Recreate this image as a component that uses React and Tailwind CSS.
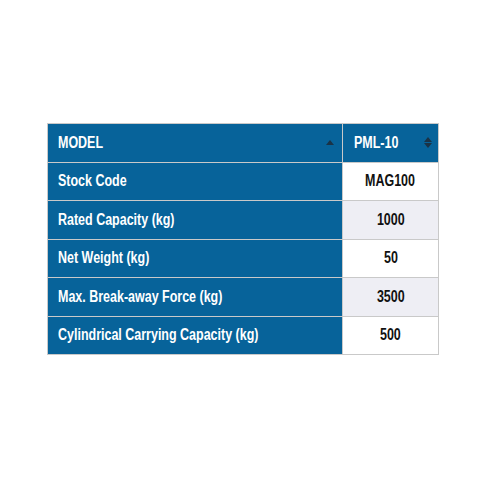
const rows = [
  ["Stock Code", "MAG100"],
  ["Rated Capacity (kg)", "1000"],
  ["Net Weight (kg)", "50"],
  ["Max. Break-away Force (kg)", "3500"],
  ["Cylindrical Carrying Capacity (kg)", "500"],
];

const Narrow = ({ children, center }) => (
  <span
    className={`inline-block whitespace-nowrap scale-x-[0.78] ${
      center ? "origin-center" : "origin-left"
    }`}
  >
    {children}
  </span>
);

const App = () => {
  return (
    <div
      className="w-[480px] h-[480px] bg-white pt-[123px] pl-[47px]"
      style={{ fontFamily: '"Liberation Sans", Arial, sans-serif' }}
    >
      <table className="border-collapse w-[392px] text-[16px] font-bold">
        <thead>
          <tr className="h-[38.5px]">
            <th className="w-[295px] border border-[#c9c9c9] bg-[#07639a] text-white text-left pl-[10px] pr-[8px]">
              <div className="flex items-center justify-between">
                <Narrow>MODEL</Narrow>
                <span className="w-0 h-0 border-l-[4px] border-r-[4px] border-b-[5px] border-l-transparent border-r-transparent border-b-[#1a3347]" />
              </div>
            </th>
            <th className="border border-[#c9c9c9] bg-[#07639a] text-white text-left pl-[11px] pr-[6px]">
              <div className="flex items-center justify-between">
                <Narrow>PML-10</Narrow>
                <span className="flex flex-col gap-[1px]">
                  <span className="w-0 h-0 border-l-[4px] border-r-[4px] border-b-[5px] border-l-transparent border-r-transparent border-b-[#1a3347]" />
                  <span className="w-0 h-0 border-l-[4px] border-r-[4px] border-t-[5px] border-l-transparent border-r-transparent border-t-[#1a3347]" />
                </span>
              </div>
            </th>
          </tr>
        </thead>
        <tbody>
          {rows.map(([label, value], i) => (
            <tr key={label} className="h-[38.5px]">
              <td className="border border-[#c9c9c9] bg-[#07639a] text-white pl-[10px]">
                <Narrow>{label}</Narrow>
              </td>
              <td
                className={`border border-[#c9c9c9] text-center text-[#111] ${
                  i % 2 === 1 ? "bg-[#eeeef4]" : "bg-white"
                }`}
              >
                <Narrow center>{value}</Narrow>
              </td>
            </tr>
          ))}
        </tbody>
      </table>
    </div>
  );
};

export default App;
